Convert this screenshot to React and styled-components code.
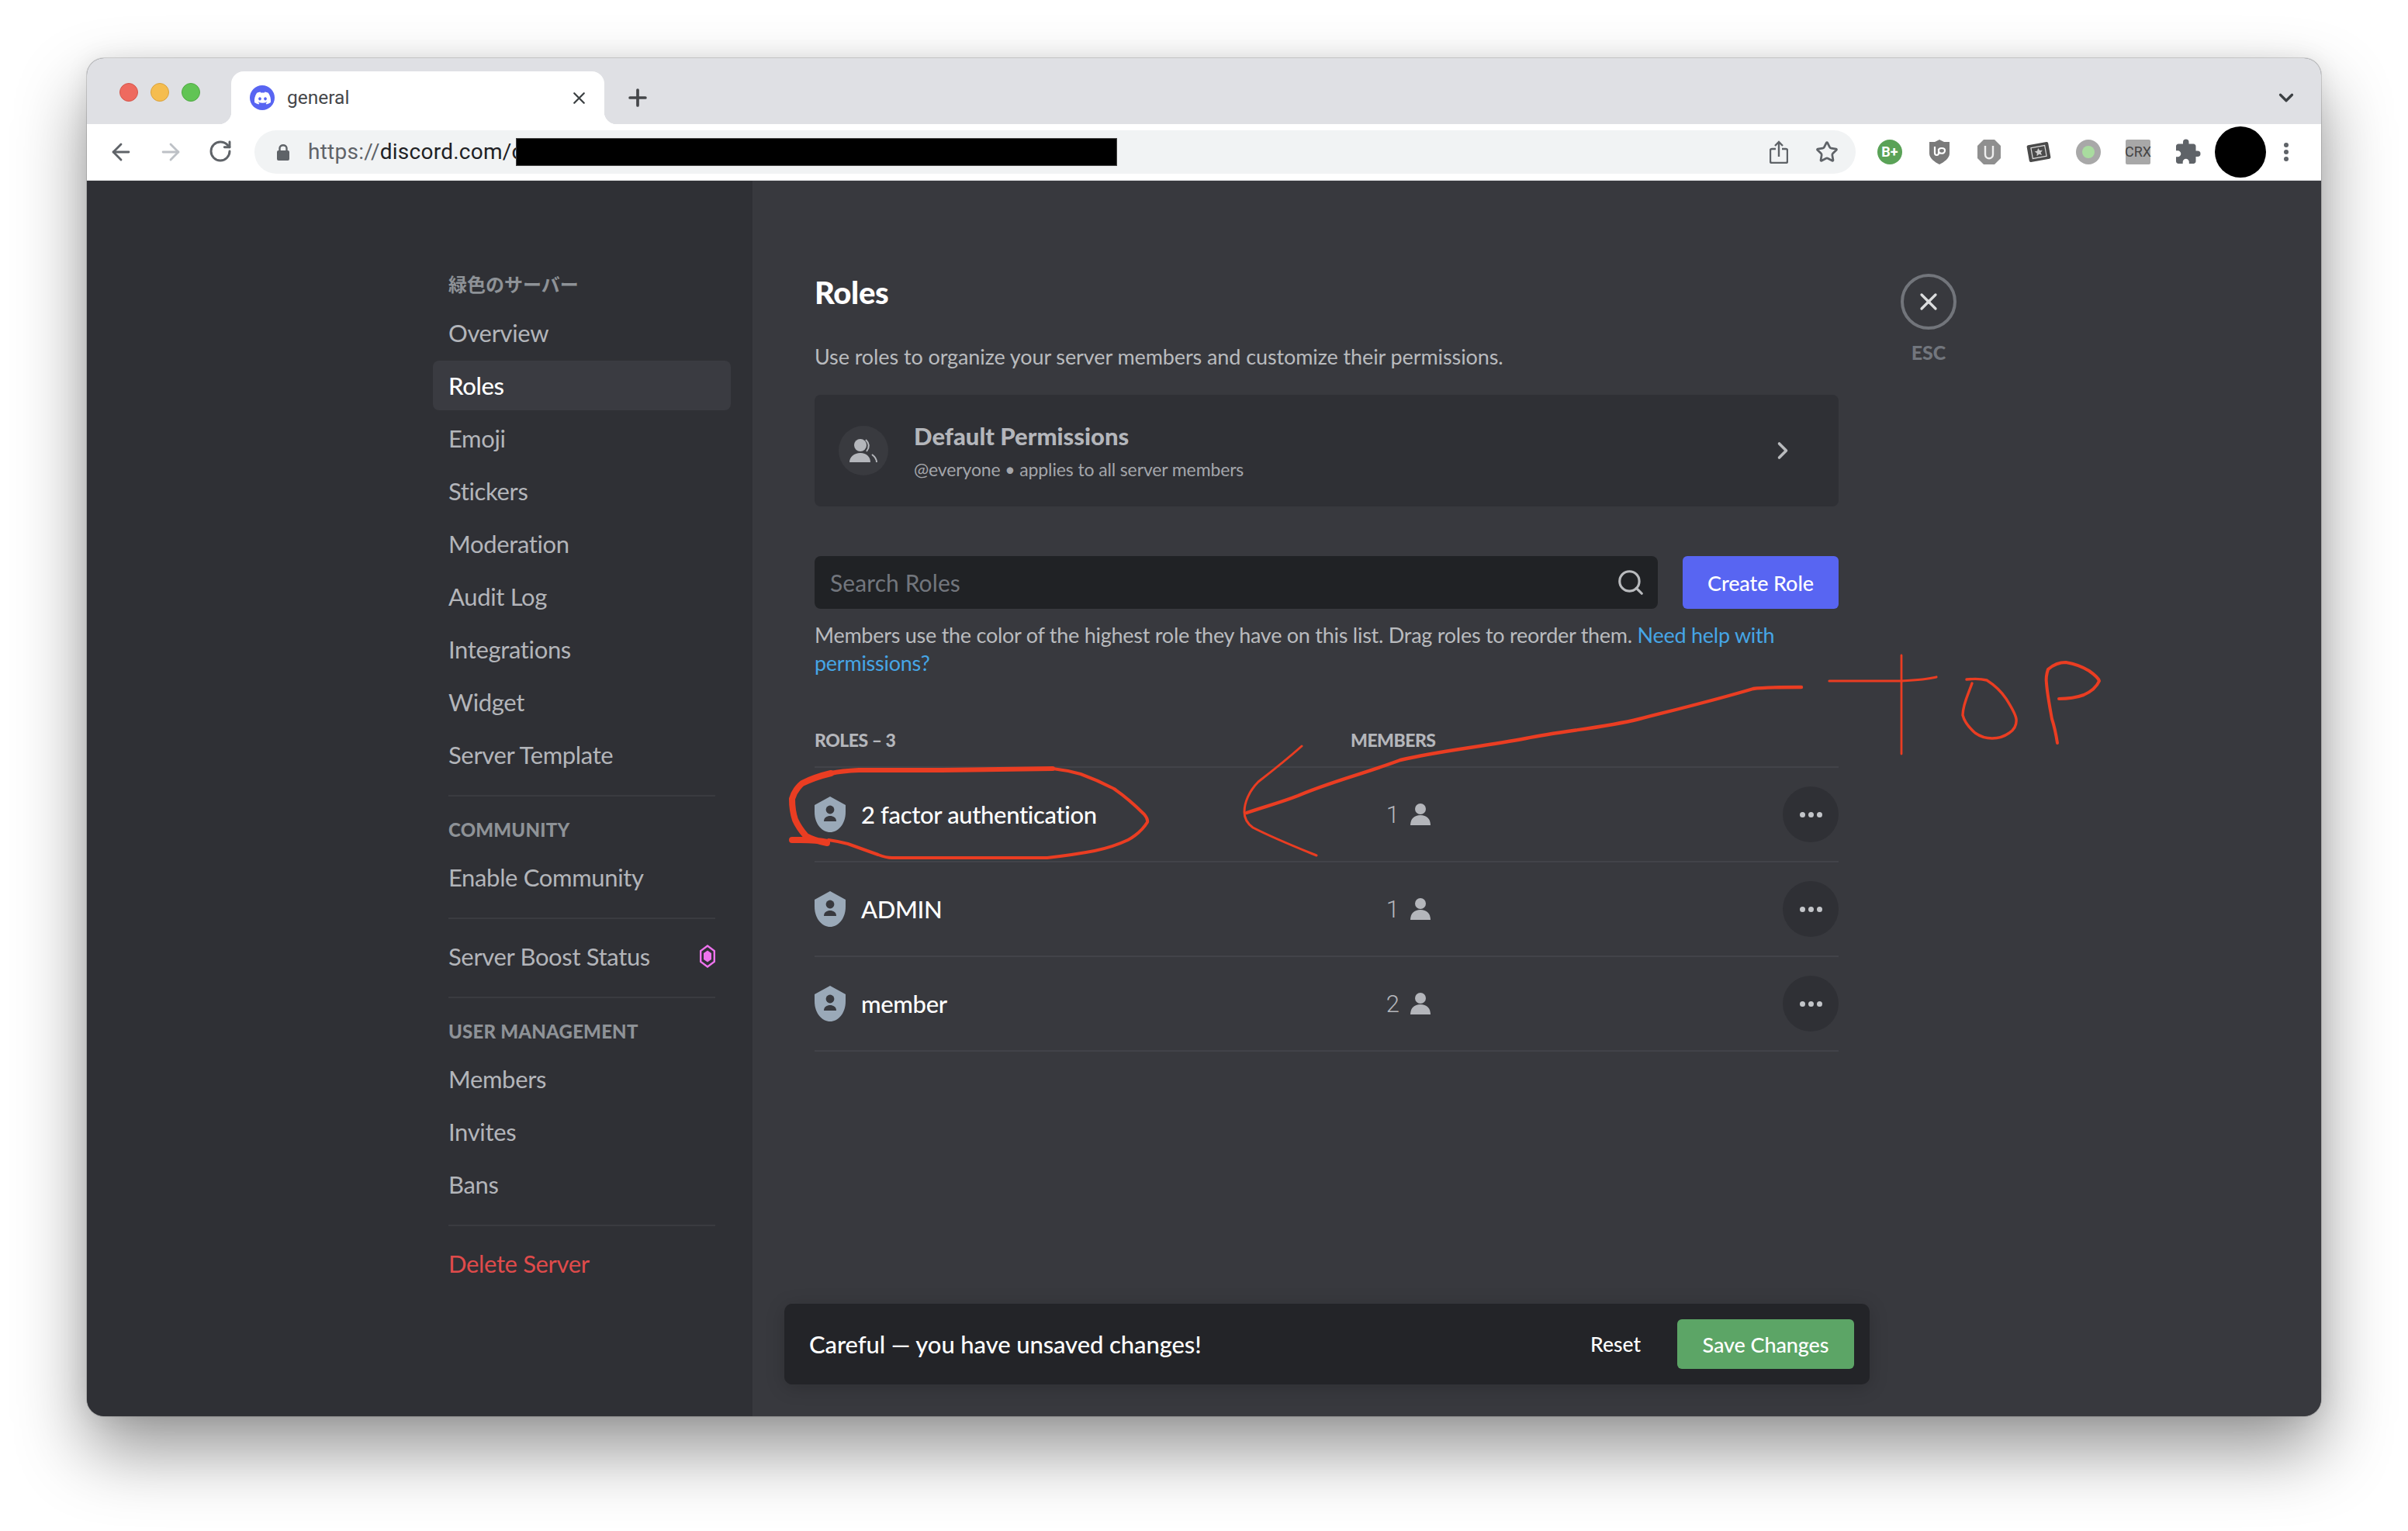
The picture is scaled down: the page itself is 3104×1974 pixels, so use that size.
import React from 'react';
import styled, { createGlobalStyle } from 'styled-components';
import { FaDiscord } from 'react-icons/fa';
import { MdExtension } from 'react-icons/md';
import { ArrowLeft, ArrowRight, RotateCw, Star, Search, X, ChevronRight, ChevronDown, Plus } from 'lucide-react';

const Global = createGlobalStyle`
  html, body { margin: 0; padding: 0; background: #fff; }
  #root { width: 3104px; height: 1974px; overflow: hidden; }
  * { box-sizing: border-box; }
`;
const ui = `"Lato", "Noto Sans CJK JP", sans-serif`;
const Page = styled.div`
  width: 3104px; height: 1974px; padding: 75px 112px 148px; background: #fff;
`;
const Win = styled.div`
  position: relative; width: 2880px; height: 1751px; border-radius: 22px; overflow: hidden;
  display: flex; flex-direction: column; background: #36393f;
`;
const WinShadow = styled.div`
  border-radius: 22px;
  box-shadow: 0 0 0 1px rgba(0,0,0,.14), 0 44px 90px rgba(0,0,0,.42), 0 0 30px rgba(0,0,0,.08);
`;
const TabStrip = styled.div`
  height: 85px; background: #dfe0e4; display: flex; padding-top: 17px; position: relative;
`;
const Lights = styled.div`
  display: flex; gap: 16px; padding: 15px 40px 0 42px; width: 186px; height: 40px;
`;
const Light = styled.span`
  flex: none; width: 24px; height: 24px; border-radius: 50%; background: ${p => p.$c};
  border: 1px solid ${p => p.$b};
`;
const Tab = styled.div`
  position: relative; width: 481px; height: 68px; background: #fff; border-radius: 16px 16px 0 0;
  display: flex; align-items: center; padding: 0 20px 0 24px; color: #3c4043;
  &::before, &::after {
    content: ''; position: absolute; bottom: 0; width: 16px; height: 16px;
  }
  &::before { left: -16px; background: radial-gradient(circle at 0 0, transparent 16px, #fff 16.5px); }
  &::after { right: -16px; background: radial-gradient(circle at 100% 0, transparent 16px, #fff 16.5px); }
`;
const Favicon = styled.span`
  width: 32px; height: 32px; border-radius: 50%; background: #5865f2; color: #fff;
  display: flex; align-items: center; justify-content: center; flex: none;
`;
const TabTitle = styled.span`
  font: 400 24.5px/1 Roboto, sans-serif; margin-left: 16px; flex: 1; color: #45474a;
`;
const NewTab = styled.div`
  color: #45474a; display: flex; align-items: center; margin: 0 0 0 26px; height: 68px;
`;
const StripEnd = styled.div`
  margin-left: auto; padding: 0 30px 0 0; height: 68px; display: flex; align-items: center; color: #3c4043;
`;
const Toolbar = styled.div`
  height: 73px; background: #fff; border-bottom: 1px solid #e3e4e6; display: flex; align-items: center; padding-bottom: 1px;
`;
const NavBtn = styled.span`
  width: 64px; flex: none; display: flex; justify-content: center; color: ${p => p.$off ? '#bdc1c6' : '#5f6368'};
`;
const NavGroup = styled.div`
  display: flex; padding-left: 12px; width: 216px;
`;
const Omni = styled.div`
  width: 2064px; height: 56px; border-radius: 28px; background: #f1f3f4; display: flex; align-items: center;
  padding-left: 28px; position: relative;
`;
const Url = styled.span`
  font: 400 28px/1 Roboto, sans-serif; color: #5f6368; margin-left: 23px; letter-spacing: .25px; white-space: nowrap;
  b { font-weight: 400; color: #202124; }
`;
const Redact = styled.span`
  display: block; width: 775px; height: 36px; background: #000; flex: none; border: 1px solid #444; margin-left: -9px; position: relative;
`;
const OmniEnd = styled.div`
  margin-left: auto; display: flex; width: 130px; padding-right: 6px; color: #5f6368;
`;
const OmniBtn = styled.span` width: 64px; display: flex; justify-content: center; `;
const Exts = styled.div` display: flex; margin-left: 12px; align-items: center; `;
const Ext = styled.span`
  width: 64px; height: 64px; display: flex; align-items: center; justify-content: center; flex: none;
`;
const Badge = styled.span`
  width: 32px; height: 32px; display: flex; align-items: center; justify-content: center;
  border-radius: ${p => p.$r || '50%'}; background: ${p => p.$bg}; color: ${p => p.$fg || '#fff'};
  font: ${p => p.$font || '700 18px/1 Roboto, sans-serif'};
`;
const Avatar = styled.span`
  width: 66px; height: 66px; border-radius: 50%; background: #000; flex: none; margin: 0 0 0 3px;
`;
const Dots = styled.span`
  width: 56px; flex: none; display: flex; flex-direction: column; align-items: center; gap: 3px; margin-left: -2px;
  i { width: 6px; height: 6px; border-radius: 50%; background: #5f6368; display: block; }
`;

const Body = styled.div` flex: 1; display: flex; min-height: 0; font-family: ${ui}; `;
const Side = styled.nav`
  width: 858px; flex: none; background: #2f3035; padding: 119px 28px 0 446px; display: flex; flex-direction: column;
`;
const SideHead = styled.div`
  height: 30px; padding-left: 20px; margin: ${p => p.$first ? '0 0 15px' : '12px 0 14px'};
  font: ${p => p.$first ? '700 24px' : '900 24px'}/30px ${ui}; color: #8e9297; text-transform: uppercase; white-space: nowrap;
  letter-spacing: ${p => p.$first ? '0' : '.2px'};
`;
const Item = styled.div`
  height: 64px; flex: none; margin-bottom: 4px; border-radius: 8px; padding: 0 20px 0 20px; display: flex; align-items: center; justify-content: space-between;
  font: ${p => p.$active ? 500 : 400} 31px/1 ${ui}; white-space: nowrap; letter-spacing: -.35px;
  color: ${p => p.$danger ? '#e04b4b' : p.$active ? '#fff' : '#b3b5ba'};
  background: ${p => p.$active ? '#3a3b41' : 'transparent'};
`;
const Sep = styled.div` height: 2px; flex: none; margin: 16px 20px; background: #3a3b40; `;

const Main = styled.main` flex: 1; display: flex; padding: 119px 0 0 81px; background: #38393e; `;
const Col = styled.div` width: 1320px; flex: none; margin-left: -1px; `;
const Title = styled.h2` margin: 0; font: 900 40px/50px ${ui}; letter-spacing: -.3px; color: #fff; `;
const Desc = styled.p` margin: 38px 0 0; font: 400 27px/40px ${ui}; letter-spacing: -.1px; color: #b9bbbe; white-space: nowrap; `;
const Card = styled.div`
  margin-top: 29px; height: 144px; background: #2f3035; border-radius: 8px; display: flex; align-items: center; padding: 0 54px 0 31px;
`;
const CardIcon = styled.span`
  width: 64px; height: 64px; border-radius: 50%; background: #393a3f; display: flex; align-items: center; justify-content: center; flex: none;
`;
const CardText = styled.div` margin-left: 33px; flex: 1; `;
const CardTitle = styled.div` font: 900 31px/40px ${ui}; letter-spacing: 0; color: #b4b6bb; `;
const CardSub = styled.div` font: 400 23px/30px ${ui}; letter-spacing: -.13px; color: #a4a6ab; margin-top: 8px; `;
const CardArrow = styled.span` color: #b9bbbe; display: flex; `;
const SearchRow = styled.div` margin-top: 64px; display: flex; gap: 32px; height: 68px; `;
const SearchBox = styled.div`
  flex: 1; background: #202225; border-radius: 8px; display: flex; align-items: center; justify-content: space-between;
  padding: 0 16px 0 20px; color: #72767d; font: 400 30px/1 ${ui}; letter-spacing: .1px;
`;
const SearchIcon = styled.span` color: #b9bbbe; display: flex; `;
const CreateBtn = styled.button`
  width: 201px; border: 0; border-radius: 6px; background: #5865f2; color: #fff; font: 500 27px/1 ${ui}; letter-spacing: -.1px; padding: 0;
`;
const Note = styled.p`
  margin: 16px 0 0; font: 400 27px/36px ${ui}; letter-spacing: -.26px; color: #b9bbbe;
`;
const NoteLink = styled.a` color: #46a6e6; text-decoration: none; `;
const Columns = styled.div`
  display: grid; grid-template-columns: 691px 103px 1fr; align-items: center;
`;
const ListHead = styled(Columns)`
  margin-top: 66px; padding-bottom: 19px; border-bottom: 2px solid #424349;
  font: 900 23px/30px ${ui}; letter-spacing: -.5px; color: #b4b6bb; height: 51px; white-space: nowrap;
`;
const Row = styled(Columns)` height: 122px; border-bottom: 2px solid #424349; `;
const RoleName = styled.div`
  display: flex; align-items: center; gap: 20px; font: 500 31px/1 ${ui}; letter-spacing: -.35px; color: #fff; white-space: nowrap;
`;
const Count = styled.div`
  display: flex; justify-content: flex-end; align-items: center; gap: 14px; font: 300 31px/1 Roboto, sans-serif; color: #b4b6bb;
`;
const More = styled.span`
  justify-self: end; width: 72px; height: 72px; border-radius: 50%; background: #2f3035; display: flex; align-items: center; justify-content: center; gap: 4px;
  i { width: 7px; height: 7px; border-radius: 50%; background: #c3c5c9; display: block; }
`;
const CloseCol = styled.div`
  margin-left: 80px; width: 72px; display: flex; flex-direction: column; align-items: center; margin-top: 1px;
`;
const CloseBtn = styled.span`
  width: 72px; height: 72px; border-radius: 50%; border: 4px solid #72757b; display: flex; align-items: center; justify-content: center; color: #dcddde;
`;
const Esc = styled.div` margin-top: 13px; font: 900 25px/32px ${ui}; color: #72767d; `;
const SaveBar = styled.div`
  position: absolute; left: 899px; top: 1606px; width: 1399px; height: 104px; border-radius: 10px; background: #232428;
  box-shadow: 0 4px 24px rgba(0,0,0,.18); display: flex; align-items: center; padding: 0 20px 0 32px; color: #fff; font-family: ${ui};
`;
const SaveText = styled.div` flex: 1; font: 500 31px/1 ${ui}; letter-spacing: -.1px; `;
const ResetBtn = styled.span` font: 500 26.5px/1 ${ui}; margin-right: 47px; `;
const SaveBtn = styled.span`
  width: 228px; height: 64px; border-radius: 6px; background: #5ca566; display: flex; align-items: center; justify-content: center; font: 500 27px/1 ${ui}; letter-spacing: -.1px;
`;
const Ink = styled.svg`
  position: absolute; left: -112px; top: -75px; width: 3104px; height: 1974px; pointer-events: none;
  path { fill: none; stroke: #ea3d22; stroke-linecap: round; stroke-linejoin: round; }
`;

const Shield = () => (
  <svg width="40" height="46" viewBox="0 0 40 46" style={{ flex: 'none' }}>
    <path fill="#9aa9b8" d="M20 0 L40 11 V20 C40 36 30 46 20 46 C10 46 0 36 0 20 V11 Z" />
    <circle cx="20" cy="17" r="5.4" fill="#38393e" />
    <path fill="#38393e" d="M12 32 C12 27 16 25 20 25 C24 25 28 27 28 32 Z" />
  </svg>
);
const Person = () => (
  <svg width="26" height="28" viewBox="0 0 26 28">
    <circle cx="13" cy="7" r="7" fill="#b4b6bb" />
    <path fill="#b4b6bb" d="M0 28 C0 20 5 15 13 15 C21 15 26 20 26 28 Z" />
  </svg>
);
const People = () => (
  <svg width="36" height="30" viewBox="0 0 36 30">
    <circle cx="14" cy="8" r="8" fill="#b4b6bb" />
    <path fill="#b4b6bb" d="M0 30 C0 23 6 18 14 18 C22 18 27 23 27 30 Z" />
    <path fill="none" stroke="#b4b6bb" strokeWidth="2" d="M21 1 C26 6 26 11 22 16 M29 20 C33 23 35 26 35 30" />
  </svg>
);
const Lock = () => (
  <svg width="18" height="22" viewBox="0 0 18 22">
    <path fill="none" stroke="#5f6368" strokeWidth="2.4" d="M4.5 10 V6 C4.5 1 13.5 1 13.5 6 V10" />
    <rect x="1" y="9" width="16" height="13" rx="2" fill="#5f6368" />
  </svg>
);
const Share = () => (
  <svg width="24" height="30" viewBox="0 0 24 30" fill="none" stroke="#5f6368" strokeWidth="2.4">
    <path d="M8 11 H3 a2 2 0 0 0 -2 2 V27 a2 2 0 0 0 2 2 H21 a2 2 0 0 0 2 -2 V13 a2 2 0 0 0 -2 -2 H16" />
    <path d="M12 21 V2 M7 7 L12 2 L17 7" />
  </svg>
);
const Ublock = () => (
  <svg width="28" height="32" viewBox="0 0 28 32">
    <path fill="#7a7a7a" d="M14 0 L20 3 L27 3 V18 C27 24 20 29 14 32 C8 29 1 24 1 18 V3 L8 3 Z" />
    <path fill="none" stroke="#fff" strokeWidth="2.2" d="M8 9 V17 C8 21 13 21 13 17 V12 M13 14 C13 10 21 10 21 14 C21 19 13 19 13 14" />
  </svg>
);
const Octagon = () => (
  <svg width="30" height="32" viewBox="0 0 30 32">
    <path fill="#8f8f8f" d="M8 0 H22 L30 8 V24 L22 32 H8 L0 24 V8 Z" />
    <path fill="none" stroke="#eee" strokeWidth="2.4" d="M10 8 V19 C10 26 20 26 20 19 V8" />
  </svg>
);
const Ticket = () => (
  <svg width="32" height="30" viewBox="0 0 32 30">
    <g transform="rotate(-10 16 15)">
      <rect x="2" y="4" width="28" height="22" rx="2" fill="#4a4a4a" />
      <rect x="7" y="8" width="18" height="14" fill="none" stroke="#ddd" strokeWidth="1.2" />
      <path fill="#ccc" d="M16 10 l1.6 3.3 3.6.4 -2.7 2.4 .8 3.6 -3.3-1.9 -3.3 1.9 .8-3.6 -2.7-2.4 3.6-.4 Z" />
    </g>
  </svg>
);
const Ring = () => (
  <svg width="32" height="32" viewBox="0 0 32 32">
    <circle cx="16" cy="16" r="16" fill="#a8a8a8" />
    <circle cx="16" cy="16" r="8" fill="#a9dc9f" />
  </svg>
);
const Boost = () => (
  <svg width="20" height="30" viewBox="0 0 20 30">
    <path fill="none" stroke="#ee73ee" strokeWidth="2.4" d="M10 1.5 L18.8 8 V22 L10 28.5 L1.2 22 V8 Z" />
    <path fill="#ee73ee" d="M10 7.5 L15 11 V19 L10 22.5 L5 19 V11 Z" />
  </svg>
);

const Scribble = () => (
  <Ink viewBox="0 0 3104 1974">
    <path strokeWidth="8" d="M1021 1083 C1035 1083 1050 1082 1066 1086 M1066 1087 C1050 1084 1039 1078 1039 1078 C1030 1068 1025 1057 1025 1057 C1021 1045 1021 1030 1021 1030 C1024 1018 1034 1010 1034 1010 C1050 1002 1071 997 1071 997" />
    <path strokeWidth="6" d="M1071 997 C1085 994 1107 993 1107 993 L1214 993 L1357 991" />
    <path strokeWidth="4" d="M1357 991 C1375 993 1393 998 1393 998 C1415 1006 1436 1017 1436 1017 C1455 1030 1475 1050 1475 1050 C1480 1056 1479 1060 1479 1060 C1470 1075 1454 1083 1454 1083 C1435 1092 1411 1097 1411 1097 C1385 1102 1350 1106 1350 1106 L1150 1106 C1142 1106 1132 1102 1132 1102 C1115 1096 1093 1088 1093 1088 C1082 1085 1068 1083 1068 1083" />
    <path strokeWidth="4.4" d="M2322 886 C2295 886 2275 886 2260 888 C2210 903 2160 915 2113 927 C2065 939 2015 942 1967 952 C1910 963 1855 968 1805 980 C1760 997 1715 1008 1673 1026 C1650 1035 1630 1040 1607 1048" />
    <path strokeWidth="3" d="M1678 962 C1660 978 1640 994 1622 1008 C1610 1020 1604 1035 1604 1047 C1604 1056 1608 1062 1615 1067 C1640 1080 1670 1092 1697 1103" />
    <path strokeWidth="2.8" d="M2451 845 V972" />
    <path strokeWidth="3.2" d="M2358 878 L2451 878 C2470 877 2484 876 2496 873" />
    <path strokeWidth="3.4" d="M2535 876 C2545 875 2553 875 2561 877 C2572 884 2580 892 2586 901 C2593 912 2598 920 2599 927 C2600 936 2596 941 2590 945 C2583 950 2575 952 2568 952 C2560 952 2553 950 2546 945 C2538 938 2532 930 2530 922 C2530 908 2538 893 2542 881" />
    <path strokeWidth="4" d="M2652 958 C2650 945 2648 936 2645 927 C2642 910 2639 895 2638 881 C2637 874 2638 869 2640 863 C2648 856 2655 854 2663 854 C2675 856 2685 860 2693 865 C2700 870 2705 874 2706 878 C2702 887 2695 892 2686 896 C2675 900 2664 901 2654 901" />
  </Ink>
);

const roles = [['2 factor authentication', 1], ['ADMIN', 1], ['member', 2]];

export default function App() {
  return (
    <Page>
      <Global />
      <WinShadow>
        <Win>
          <TabStrip>
            <Lights>
              <Light $c="#ee6a5f" $b="#d4574c" />
              <Light $c="#f5bd4f" $b="#d9a23f" />
              <Light $c="#61c454" $b="#52a945" />
            </Lights>
            <Tab>
              <Favicon><FaDiscord size={23} /></Favicon>
              <TabTitle>general</TabTitle>
              <X size={25} strokeWidth={2.2} />
            </Tab>
            <NewTab><Plus size={34} strokeWidth={2.6} /></NewTab>
            <StripEnd><ChevronDown size={30} strokeWidth={2.6} /></StripEnd>
          </TabStrip>
          <Toolbar>
            <NavGroup>
              <NavBtn><ArrowLeft size={34} strokeWidth={2} /></NavBtn>
              <NavBtn $off><ArrowRight size={34} strokeWidth={2} /></NavBtn>
              <NavBtn><RotateCw size={32} strokeWidth={2.2} /></NavBtn>
            </NavGroup>
            <Omni>
              <Lock />
              <Url>https://<b>discord.com/c</b></Url>
              <Redact />
              <OmniEnd>
                <OmniBtn><Share /></OmniBtn>
                <OmniBtn><Star size={30} strokeWidth={2.2} /></OmniBtn>
              </OmniEnd>
            </Omni>
            <Exts>
              <Ext><Badge $bg="#5aa257">B+</Badge></Ext>
              <Ext><Ublock /></Ext>
              <Ext><Octagon /></Ext>
              <Ext><Ticket /></Ext>
              <Ext><Ring /></Ext>
              <Ext><Badge $bg="#a8a8a8" $fg="#444" $r="2px" $font="400 18px/1 Roboto, sans-serif">CRX</Badge></Ext>
              <Ext><MdExtension size={36} color="#5f6368" /></Ext>
              <Avatar />
              <Dots><i /><i /><i /></Dots>
            </Exts>
          </Toolbar>
          <Body>
            <Side>
              <SideHead $first>緑色のサーバー</SideHead>
              <Item>Overview</Item>
              <Item $active>Roles</Item>
              <Item>Emoji</Item>
              <Item>Stickers</Item>
              <Item>Moderation</Item>
              <Item>Audit Log</Item>
              <Item>Integrations</Item>
              <Item>Widget</Item>
              <Item>Server Template</Item>
              <Sep />
              <SideHead>Community</SideHead>
              <Item>Enable Community</Item>
              <Sep />
              <Item>Server Boost Status<Boost /></Item>
              <Sep />
              <SideHead>User Management</SideHead>
              <Item>Members</Item>
              <Item>Invites</Item>
              <Item>Bans</Item>
              <Sep />
              <Item $danger>Delete Server</Item>
            </Side>
            <Main>
              <Col>
                <Title>Roles</Title>
                <Desc>Use roles to organize your server members and customize their permissions.</Desc>
                <Card>
                  <CardIcon><People /></CardIcon>
                  <CardText>
                    <CardTitle>Default Permissions</CardTitle>
                    <CardSub>@everyone • applies to all server members</CardSub>
                  </CardText>
                  <CardArrow><ChevronRight size={36} strokeWidth={2.4} /></CardArrow>
                </Card>
                <SearchRow>
                  <SearchBox>
                    Search Roles
                    <SearchIcon><Search size={38} strokeWidth={2} /></SearchIcon>
                  </SearchBox>
                  <CreateBtn>Create Role</CreateBtn>
                </SearchRow>
                <Note>Members use the color of the highest role they have on this list. Drag roles to reorder them. <NoteLink>Need help with</NoteLink> <NoteLink>permissions?</NoteLink></Note>
                <ListHead>
                  <span>ROLES – 3</span>
                  <span>MEMBERS</span>
                </ListHead>
                {roles.map(([name, n]) => (
                  <Row key={name}>
                    <RoleName><Shield />{name}</RoleName>
                    <Count>{n}<Person /></Count>
                    <More><i /><i /><i /></More>
                  </Row>
                ))}
              </Col>
              <CloseCol>
                <CloseBtn><X size={36} strokeWidth={2.2} /></CloseBtn>
                <Esc>ESC</Esc>
              </CloseCol>
            </Main>
          </Body>
          <SaveBar>
            <SaveText>Careful — you have unsaved changes!</SaveText>
            <ResetBtn>Reset</ResetBtn>
            <SaveBtn>Save Changes</SaveBtn>
          </SaveBar>
          <Scribble />
        </Win>
      </WinShadow>
    </Page>
  );
}
